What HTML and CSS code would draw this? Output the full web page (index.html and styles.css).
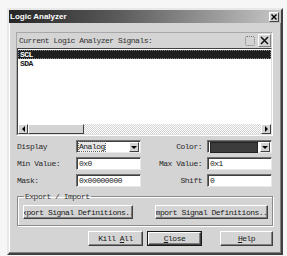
FILE: index.html
```html
<!DOCTYPE html>
<html lang="en">
<head>
    <meta charset="UTF-8">
    <title>Logic Analyzer</title>
    <link rel="stylesheet" href="styles.css">
</head>
<body>
    <div class="window">
        <div class="titlebar">
            <span class="title">Logic Analyzer</span>
            <span class="close-btn">
                <svg width="6" height="6" viewBox="0 0 6 6"><path d="M0.5 0.5L5.5 5.5M5.5 0.5L0.5 5.5" stroke="#000" stroke-width="1.4"/></svg>
            </span>
        </div>
        <div class="content">
            <div class="signals">
                <div class="signals-head">
                    <span>Current Logic Analyzer Signals:</span>
                    <div class="tools">
                        <span class="tool"><span class="dots"></span></span>
                        <span class="tool raised">
                            <svg width="9" height="9" viewBox="0 0 9 9"><path d="M1 1L8 8M8 1L1 8" stroke="#111" stroke-width="1.5"/></svg>
                        </span>
                    </div>
                </div>
                <div class="list">
                    <div class="rows">
                        <div class="row selected">SCL</div>
                        <div class="row">SDA</div>
                    </div>
                    <div class="hscroll">
                        <span class="sbtn"><span class="tri left"></span></span>
                        <span class="thumb"></span>
                        <span class="track"></span>
                        <span class="sbtn"><span class="tri right"></span></span>
                    </div>
                </div>
            </div>

            <div class="form">
                <label class="lbl">Display</label>
                <div class="field combo"><span class="val focus">Analog</span><span class="drop"><span class="tri down"></span></span></div>
                <label class="lbl right">Color:</label>
                <div class="field combo"><span class="swatch"></span><span class="drop"><span class="tri down"></span></span></div>

                <label class="lbl">Min Value:</label>
                <div class="field"><span class="val">0x0</span></div>
                <label class="lbl right">Max Value:</label>
                <div class="field"><span class="val">0x1</span></div>

                <label class="lbl">Mask:</label>
                <div class="field"><span class="val">0x00000000</span></div>
                <label class="lbl right">Shift</label>
                <div class="field"><span class="val">0</span></div>
            </div>

            <fieldset class="group">
                <legend>Export / Import</legend>
                <button class="btn wide"><span>Export Signal Definitions...</span></button>
                <button class="btn wide second"><span>Import Signal Definitions...</span></button>
            </fieldset>

            <div class="actions">
                <button class="btn action"><span>Kill <u>A</u>ll</span></button>
                <button class="btn action default"><span><u>C</u>lose</span></button>
                <button class="btn action help"><span><u>H</u>elp</span></button>
            </div>
        </div>
    </div>
</body>
</html>
```

FILE: styles.css
```css
body {
    margin: 0;
    padding: 8px 0 0 7px;
    background: #f6f6f6;
    font-family: "Liberation Mono", "DejaVu Sans Mono", monospace;
    font-size: 8px;
    letter-spacing: -0.5px;
    color: #1a1a1a;
}

.window {
    width: 276px;
    box-sizing: border-box;
    background: #d4d4d4;
    border: 2px solid;
    border-color: #e8e8e8 #404040 #404040 #e8e8e8;
    box-shadow: inset -1px -1px #808080, inset 1px 1px #fff;
    padding-bottom: 7px;
}

.titlebar {
    display: flex;
    align-items: center;
    justify-content: space-between;
    height: 13px;
    padding: 0 2px 0 1px;
    background: linear-gradient(to right, #262626, #5a5a5a 40%, #c6c6c6);
}

.title {
    font-family: "Liberation Sans", Arial, sans-serif;
    font-weight: bold;
    font-size: 8px;
    letter-spacing: 0;
    color: #fff;
}

.close-btn {
    display: flex;
    align-items: center;
    justify-content: center;
    width: 10px;
    height: 10px;
    box-sizing: border-box;
    background: #d4d4d4;
    border: 1px solid;
    border-color: #fff #404040 #404040 #fff;
}

.content {
    padding: 9px 8px 0 7px;
}

/* signal list */
.signals {
    border: 1px solid;
    border-color: #a8a8a8 #fff #fff #a8a8a8;
}

.signals-head {
    display: flex;
    align-items: center;
    justify-content: space-between;
    height: 15px;
    padding-left: 2px;
    color: #333;
}

.tools {
    display: flex;
    gap: 2px;
    padding-right: 1px;
}

.tool {
    display: flex;
    align-items: center;
    justify-content: center;
    width: 13px;
    height: 13px;
    box-sizing: border-box;
}

.tool.raised {
    border: 1px solid;
    border-color: #fff #808080 #808080 #fff;
}

.dots {
    width: 8px;
    height: 8px;
    border: 1px dotted #777;
    border-radius: 2px;
}

.list {
    display: flex;
    flex-direction: column;
    height: 87px;
    box-sizing: border-box;
    background: #fff;
    border: 1px solid;
    border-color: #404040 #e0e0e0 #e0e0e0 #404040;
}

.rows {
    flex: 1;
    padding-top: 1px;
}

.row {
    height: 9px;
    line-height: 9px;
    padding-left: 2px;
    font-weight: bold;
}

.row.selected {
    background: #1e1e1e;
    color: #fff;
    outline: 1px dotted #888;
    outline-offset: -1px;
}

.hscroll {
    display: flex;
    height: 10px;
}

.sbtn, .thumb {
    box-sizing: border-box;
    height: 10px;
    background: #d4d4d4;
    border: 1px solid;
    border-color: #fff #404040 #404040 #fff;
}

.sbtn {
    width: 10px;
    display: flex;
    align-items: center;
    justify-content: center;
}

.thumb {
    width: 56px;
}

.track {
    flex: 1;
    background: repeating-conic-gradient(#d4d4d4 0 25%, #fff 0 50%) 0 0 / 2px 2px;
}

.tri {
    width: 0;
    height: 0;
    border: 3px solid transparent;
}

.tri.left {
    border-right-color: #000;
    border-left-width: 0;
}

.tri.right {
    border-left-color: #000;
    border-right-width: 0;
}

.tri.down {
    border-top-color: #000;
    border-width: 3px 3px 0;
}

/* fields */
.form {
    display: grid;
    grid-template-columns: 60px 65px 66px 65px;
    grid-auto-rows: 13px;
    row-gap: 4px;
    margin-top: 4px;
    align-items: center;
}

.lbl {
    padding-left: 1px;
    color: #2a2a2a;
}

.lbl.right {
    text-align: right;
    padding-right: 5px;
}

.field {
    display: flex;
    align-items: center;
    height: 13px;
    box-sizing: border-box;
    background: #fff;
    border: 1px solid;
    border-color: #707070 #e8e8e8 #e8e8e8 #707070;
    box-shadow: inset 1px 1px #404040;
    padding-left: 2px;
}

.field.combo {
    padding: 0 1px 0 2px;
    justify-content: space-between;
}

.focus {
    background: #e8e8e8;
    outline: 1px dotted #666;
}

.drop {
    display: flex;
    align-items: center;
    justify-content: center;
    width: 10px;
    height: 10px;
    margin-top: 1px;
    box-sizing: border-box;
    background: #d4d4d4;
    border: 1px solid;
    border-color: #fff #404040 #404040 #fff;
}

.swatch {
    flex: 1;
    height: 9px;
    margin: 1px 2px 0 0;
    background: #3c3c3c;
    border: 1px solid #222;
}

/* export / import */
.group {
    margin: 5px 0 0 1px;
    padding: 4px 4px 6px 5px;
    display: flex;
    justify-content: space-between;
    border: 1px solid #8a8a8a;
    box-shadow: 1px 1px #fff, inset 1px 1px #fff;
}

.group legend {
    padding: 0 1px;
    margin-left: 1px;
    color: #333;
}

.btn {
    font-family: inherit;
    font-size: 8px;
    letter-spacing: -0.5px;
    color: #1a1a1a;
    background: #d4d4d4;
    border: 1px solid;
    border-color: #fff #404040 #404040 #fff;
    box-shadow: inset -1px -1px #808080;
    padding: 0;
    height: 14px;
    display: flex;
    align-items: center;
    justify-content: center;
    overflow: hidden;
    white-space: nowrap;
}

.btn.wide {
    width: 110px;
}

.btn.wide.second {
    width: 113px;
}

.actions {
    display: flex;
    justify-content: flex-end;
    gap: 4px;
    margin-top: 5px;
}

.btn.action {
    width: 55px;
    height: 15px;
}

.btn.default {
    outline: 1px solid #1a1a1a;
    outline-offset: -1px;
    border-width: 2px;
}

.btn.help {
    width: 53px;
    margin-left: 14px;
}
```
